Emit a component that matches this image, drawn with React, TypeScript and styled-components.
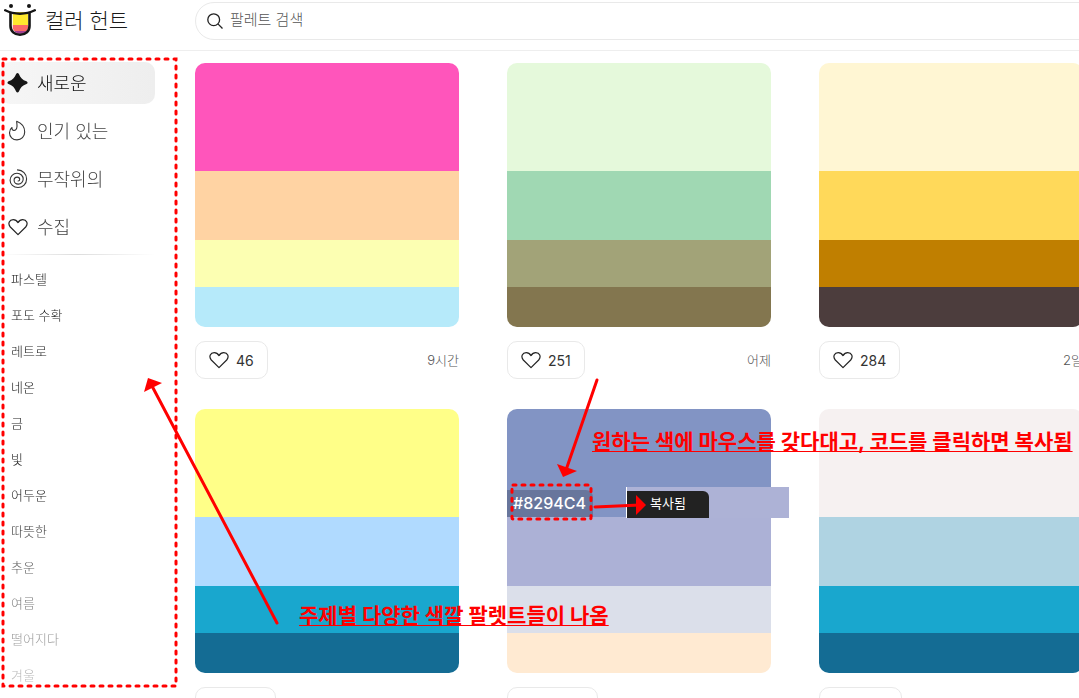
import React from "react";
import styled, { createGlobalStyle } from "styled-components";

const Global = createGlobalStyle`
  * { box-sizing: border-box; }
  body { margin: 0; background: #fff; color: #1a1a1a; font-family: Inter, "Noto Sans CJK KR", sans-serif; }
  button, input { font: inherit; color: inherit; }
  a { color: inherit; text-decoration: none; }
  ul { list-style: none; margin: 0; padding: 0; }
`;

const Page = styled.div`
  position: relative;
  height: 100vh;
  overflow: hidden;
  display: flex;
  flex-direction: column;
`;

const Header = styled.header`
  flex: none;
  height: 51px;
  padding-bottom: 9px;
  border-bottom: 1px solid #eee;
  display: flex;
  align-items: center;
  overflow: hidden;
`;

const Brand = styled.a`
  flex: none;
  width: 195px;
  padding-left: 4px;
  display: flex;
  align-items: center;
  gap: 9px;
  font-size: 21px;
  line-height: 30px;
  font-weight: 300;
`;

const Search = styled.label`
  flex: 1;
  height: 38px;
  margin-right: -24px;
  padding-left: 11px;
  border: 1px solid #e9e9e9;
  border-radius: 20px;
  display: flex;
  align-items: center;
  gap: 7px;
`;

const SearchInput = styled.input`
  flex: 1;
  border: 0;
  outline: 0;
  padding: 0 0 2px;
  background: none;
  font-size: 15px;
  line-height: 20px;
  font-weight: 300;
  &::placeholder { color: #555; opacity: 1; }
`;

const Body = styled.div`
  flex: 1;
  min-height: 0;
  display: flex;
`;

const Sidebar = styled.nav`
  flex: none;
  width: 195px;
  padding: 11px 40px 0 0;
  mask-image: linear-gradient(#000 0, #000 440px, rgba(0, 0, 0, 0.3) 630px);
`;

const MainList = styled.ul`
  display: flex;
  flex-direction: column;
  gap: 6px;
`;

const MainLink = styled.a<{ $active?: boolean }>`
  height: 42px;
  padding-left: 7px;
  border-radius: 10px;
  display: flex;
  align-items: center;
  gap: 8px;
  font-size: 18px;
  font-weight: 300;
  color: ${(p) => (p.$active ? "#111" : "#444")};
  background: ${(p) => (p.$active ? "linear-gradient(90deg, #f6f6f6, #eee)" : "none")};
`;

const IconSlot = styled.span`
  width: 22px;
  display: flex;
  justify-content: center;
`;

const MainLabel = styled.span`
  padding-bottom: 2px;
`;

const Divider = styled.hr`
  height: 1px;
  margin: 6px 0;
  border: 0;
  background: linear-gradient(90deg, #fff, #ddd 50%, #fff);
`;

const TagLink = styled.a`
  height: 36px;
  padding: 0 0 2px 11px;
  display: flex;
  align-items: center;
  font-size: 13px;
  font-weight: 300;
`;

const Feed = styled.main`
  flex: 1;
  min-width: 0;
  padding-top: 12px;
  display: grid;
  grid-template-columns: repeat(3, minmax(264px, 1fr));
  grid-auto-rows: max-content;
  column-gap: 48px;
  row-gap: 30px;
`;

const Swatches = styled.div`
  height: 264px;
  border-radius: 10px;
  overflow: hidden;
  display: grid;
  grid-template-rows: 108fr 69fr 47fr 40fr;
`;

const Swatch = styled.div<{ $color: string }>`
  background: ${(p) => p.$color};
  display: flex;
  align-items: flex-end;
`;

const Code = styled.button`
  height: 27px;
  padding: 0 7px 0 6px;
  border: 0;
  border-radius: 0 7px 0 0;
  background: rgba(0, 0, 0, 0.2);
  color: #fff;
  font-size: 16px;
  line-height: 27px;
  font-weight: 500;
`;

const Meta = styled.div`
  margin-top: 14px;
  display: flex;
  align-items: center;
  justify-content: space-between;
`;

const Like = styled.button`
  height: 38px;
  padding: 0 13px;
  border: 1px solid #e9e9e9;
  border-radius: 10px;
  background: #fff;
  display: flex;
  align-items: center;
  gap: 7px;
  font-size: 14px;
  color: #333;
`;

const Age = styled.span`
  padding-bottom: 2px;
  font-size: 13px;
  font-weight: 300;
  color: #555;
`;

const Overlay = styled.div`
  position: absolute;
  inset: 0;
  pointer-events: none;
`;

const Marks = styled.svg`
  position: absolute;
  inset: 0;
  width: 100%;
  height: 100%;
`;

const Note = styled.p<{ $x: number; $y: number }>`
  position: absolute;
  left: ${(p) => p.$x}px;
  top: ${(p) => p.$y}px;
  margin: 0;
  font-size: 21px;
  line-height: 28px;
  font-weight: 700;
  color: #f00;
  white-space: nowrap;
  text-decoration: underline;
  text-decoration-thickness: 1px;
  text-underline-offset: 2px;
  text-decoration-skip-ink: none;
`;

const CopiedPatch = styled.div`
  position: absolute;
  left: 626px;
  top: 487px;
  width: 163px;
  height: 31px;
  padding-top: 4px;
  border-left: 1px solid #fff;
  background: #adb2d6;
`;

const Copied = styled.div`
  width: 82px;
  height: 27px;
  border-radius: 0 6px 0 0;
  background: #222;
  color: #fff;
  font-size: 13px;
  line-height: 25px;
  text-align: center;
`;

const HeartIcon = () => (
  <svg width="20" height="20" viewBox="0 0 20 20" fill="none" stroke="#222" strokeWidth="1.2" aria-hidden="true">
    <path d="M10 17.6 2.3 10C-.6 6.400 1.500 2.600 5.200 2.600c2.400 0 3.800 1.300 4.800 3 1-1.700 2.400-3 4.800-3 3.700 0 5.800 3.800 2.900 7.400Z" strokeLinejoin="round" />
  </svg>
);

const StarIcon = () => (
  <svg width="22" height="22" viewBox="0 0 22 22" fill="#161616" aria-hidden="true">
    <path d="M9.100 2Q10.500.2 11.900 2C13.300 5.700 15.500 8 19.500 9.300Q21.700 10.600 19.500 12C15.500 13.500 13.300 15.700 11.900 19.400Q10.500 21.400 9.100 19.400C7.700 15.700 5.500 13.500 1.500 12Q-.6 10.600 1.500 9.300C5.500 8 7.700 5.700 9.100 2Z" />
  </svg>
);

const FlameIcon = () => (
  <svg width="22" height="22" viewBox="0 0 22 22" fill="none" stroke="#333" strokeWidth="1.1" strokeLinejoin="round" aria-hidden="true">
    <path d="M9.700 1.200C14.500 3 17.700 7.300 17.700 12c0 4.500-3.300 7.900-7.700 7.900-4.400 0-7.500-3.200-7.500-7.200 0-2.200.9-4 2.500-5.200-.2 1.700.6 2.900 1.900 2.900 1.600 0 2.900-1.500 3.100-3.900.1-1.700-.2-3.300-.3-4.500Z" />
  </svg>
);

const SpiralIcon = () => (
  <svg width="22" height="22" viewBox="0 0 22 22" fill="none" stroke="#333" strokeWidth="1.100" strokeLinecap="round" aria-hidden="true">
    <path d="M10.500 1.900C15.800 2 19.600 6 19.600 10.900c0 4.900-3.800 8.600-8.600 8.600-4.500 0-7.900-3.200-7.900-7.300 0-3.800 3-6.900 6.900-6.900 3.500 0 6.200 2.600 6.200 5.800 0 2.900-2.200 5-4.900 5-2.400 0-4.200-1.700-4.200-3.800 0-1.800 1.400-3.200 3.100-3.200 1.500 0 2.500 1 2.500 2.300 0 1-.7 1.600-1.600 1.600" />
  </svg>
);

const SearchIcon = () => (
  <svg width="16" height="16" viewBox="0 0 16 16" fill="none" stroke="#222" strokeWidth="1.300" aria-hidden="true">
    <circle cx="6.700" cy="6.700" r="5.900" />
    <path d="m10.900 10.900 4.600 4.600" />
  </svg>
);

const LogoIcon = () => (
  <svg width="32" height="34" viewBox="0 0 32 34" aria-hidden="true">
    <clipPath id="tongue">
      <path d="M8.800 8h15.200v15c0 4.200-3 6.800-7.300 6.800S8.800 27.200 8.800 23Z" />
    </clipPath>
    <circle cx="7" cy="2" r="2" fill="#151515" />
    <circle cx="25" cy="2" r="2" fill="#151515" />
    <g clipPath="url(#tongue)">
      <path d="M8 8h17v13H8z" fill="#ffe92e" />
      <path d="M8 21h17v6H8z" fill="#fb6a68" />
      <path d="M8 27h17v4H8z" fill="#a23f91" />
    </g>
    <path d="M6.500 9V22c0 5.300 4 8.800 9.500 8.800s9.500-3.500 9.500-8.800V9" fill="none" stroke="#151515" strokeWidth="2.600" />
    <path d="M1.200 6.300c9 4.600 20.600 4.600 29.600 0" fill="none" stroke="#151515" strokeWidth="2.400" strokeLinecap="round" />
  </svg>
);

const mainLinks = [
  { label: "새로운", Icon: StarIcon },
  { label: "인기 있는", Icon: FlameIcon },
  { label: "무작위의", Icon: SpiralIcon },
  { label: "수집", Icon: HeartIcon },
];

const tags = ["파스텔", "포도 수확", "레트로", "네온", "금", "빛", "어두운", "따뜻한", "추운", "여름", "떨어지다", "겨울"];

const palettes = [
  { colors: ["#ff55bb", "#ffd3a3", "#fcffb2", "#b6eafa"], likes: "46", age: "9시간" },
  { colors: ["#e5f9db", "#a0d8b3", "#a2a378", "#83764f"], likes: "251", age: "어제" },
  { colors: ["#fff6d3", "#ffd95a", "#c07f00", "#4c3d3d"], likes: "284", age: "2일" },
  { colors: ["#ffff88", "#b0daff", "#19a7ce", "#146c94"], likes: "293", age: "2일" },
  { colors: ["#8294c4", "#acb1d6", "#dbdfea", "#ffead2"], likes: "1,340", age: "3일", code: "#8294C4" },
  { colors: ["#f6f1f1", "#afd3e2", "#19a7ce", "#146c94"], likes: "1,112", age: "4일" },
];

export default function App() {
  return (
    <Page>
      <Global />
      <Header>
        <Brand href="#"><LogoIcon />컬러 헌트</Brand>
        <Search>
          <SearchIcon />
          <SearchInput type="text" placeholder="팔레트 검색" aria-label="팔레트 검색" />
        </Search>
      </Header>
      <Body>
        <Sidebar>
          <MainList>
            {mainLinks.map(({ label, Icon }, i) => (
              <li key={label}>
                <MainLink href="#" $active={i === 0}>
                  <IconSlot><Icon /></IconSlot>
                  <MainLabel>{label}</MainLabel>
                </MainLink>
              </li>
            ))}
          </MainList>
          <Divider />
          <ul>
            {tags.map((tag) => (
              <li key={tag}><TagLink href="#">{tag}</TagLink></li>
            ))}
          </ul>
        </Sidebar>
        <Feed>
          {palettes.map((p, i) => (
            <article key={i}>
              <Swatches>
                {p.colors.map((c, j) => (
                  <Swatch key={c} $color={c}>{j === 0 && p.code && <Code>{p.code}</Code>}</Swatch>
                ))}
              </Swatches>
              <Meta>
                <Like><HeartIcon />{p.likes}</Like>
                <Age>{p.age}</Age>
              </Meta>
            </article>
          ))}
        </Feed>
      </Body>
      <Overlay>
        <CopiedPatch><Copied>복사됨</Copied></CopiedPatch>
        <Marks aria-hidden="true">
          <g fill="none" stroke="#f00" strokeWidth="3" strokeLinecap="round" strokeDasharray="3 6">
            <rect x="3" y="59" width="173" height="627" />
            <rect x="512" y="485" width="79" height="34" rx="1" />
          </g>
          <g fill="none" stroke="#f00" strokeWidth="3" strokeLinecap="round">
            <path d="M277 623 152 386" />
            <path d="m597 380-31 90" />
            <path d="m595 507 45-2" />
          </g>
          <g fill="#f00">
            <path d="m148 378 14 5-18 9Z" />
            <path d="m563 477-6-13 20 7Z" />
            <path d="m646 505-10-10v20Z" />
          </g>
        </Marks>
        <Note $x={592} $y={428}>원하는 색에 마우스를 갖다대고, 코드를 클릭하면 복사됨</Note>
        <Note $x={299} $y={602}>주제별 다양한 색깔 팔렛트들이 나옴</Note>
      </Overlay>
    </Page>
  );
}
